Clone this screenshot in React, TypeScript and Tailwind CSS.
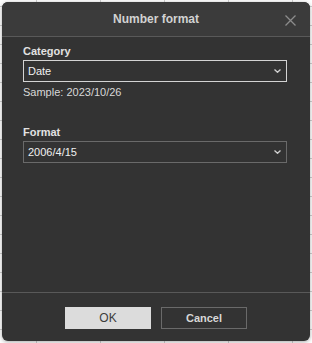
import React from 'react';

const COLS = 6;
const ROWS = 20;

function Chevron() {
  return (
    <svg width="7" height="4" viewBox="0 0 7 4" className="shrink-0">
      <polyline points="0.5,0.5 3.5,3.3 6.5,0.5" fill="none" stroke="#d0d0d0" strokeWidth="1.3" />
    </svg>
  );
}

function SelectBox({ value, focused }: { value: string; focused?: boolean }) {
  return (
    <div
      className={`mt-[2px] flex h-[22px] w-[264px] items-center justify-between border pl-[4px] pr-[5px] ${
        focused ? 'border-[#d4d4d4]' : 'border-[#6a6a6a]'
      }`}
    >
      <span className="text-[11px] leading-[13px] text-[#f0f0f0]">{value}</span>
      <Chevron />
    </div>
  );
}

export default function App() {
  return (
    <div className="relative h-[343px] w-[312px] overflow-hidden bg-white font-['Liberation_Sans',Arial,sans-serif]">
      {/* spreadsheet behind the dialog */}
      <div className="absolute left-[-27px] top-[-12px] grid grid-cols-[repeat(6,64px)]">
        {Array.from({ length: COLS * ROWS }).map((_, i) => (
          <div key={i} className="h-[19px] w-[64px] border-b border-r border-[#d0d0d0]" />
        ))}
      </div>

      {/* dialog */}
      <div className="absolute left-[2px] top-[2px] flex h-[339px] w-[308px] flex-col rounded-[6px] bg-[#333333] shadow-[0_1px_4px_rgba(0,0,0,0.35)]">
        {/* Header */}
        <div className="relative flex h-[35px] shrink-0 items-center justify-center rounded-t-[6px] border-b border-[#595959] bg-[#3b3b3b]">
          <span className="text-[12px] font-bold text-[#d2d2d2]">Number format</span>
          <svg width="11" height="11" viewBox="0 0 11 11" className="absolute right-[14px] top-[13px]">
            <path d="M0.5 0.5 L10.5 10.5 M10.5 0.5 L0.5 10.5" stroke="#8c8c8c" strokeWidth="1.3" />
          </svg>
        </div>

        {/* Body */}
        <div className="flex flex-1 flex-col pl-[21px] pt-[8px]">
          <label className="text-[11px] font-bold leading-[13px] text-[#e2e2e2]">Category</label>
          <SelectBox value="Date" focused />
          <p className="mt-[4px] text-[11px] leading-[13px] text-[#d8d8d8]">Sample: 2023/10/26</p>

          <label className="mt-[27px] text-[11px] font-bold leading-[13px] text-[#e2e2e2]">Format</label>
          <SelectBox value="2006/4/15" />
        </div>

        {/* Footer */}
        <div className="flex h-[49px] shrink-0 justify-center gap-[10px] border-t border-[#595959] pt-[14px]">
          <button className="h-[22px] w-[86px] bg-[#dcdcdc] text-[12px] text-[#3c3c3c]">OK</button>
          <button className="h-[22px] w-[86px] border border-[#6a6a6a] text-[11px] font-bold text-[#d8d8d8]">
            Cancel
          </button>
        </div>
      </div>
    </div>
  );
}
